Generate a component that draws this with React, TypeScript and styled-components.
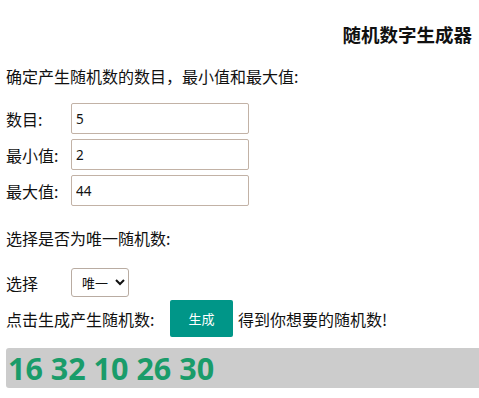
import { useState } from 'react';
import styled, { createGlobalStyle } from 'styled-components';

const GlobalStyle = createGlobalStyle`
  body {
    margin: 0;
    background: #fff;
    font-family: "Noto Sans CJK SC", "Noto Sans", sans-serif;
    color: #111;
  }
`;

const Page = styled.div`
  padding: 0 0 0 6px;
  font-size: 16px;
`;

const Title = styled.h1`
  margin: 0;
  padding: 21px 7px 0 0;
  text-align: right;
  font-size: 18.5px;
  line-height: 26px;
  font-weight: 700;
`;

const Text = styled.p<{ $top: number }>`
  margin: ${(p) => p.$top}px 0 0;
  line-height: 24px;
`;

const Fields = styled.div`
  display: flex;
  flex-direction: column;
  gap: 5px;
  margin-top: 15px;
`;

const Row = styled.div<{ $top?: number }>`
  display: flex;
  align-items: center;
  margin-top: ${(p) => p.$top ?? 0}px;
`;

const Label = styled.label`
  width: 65px;
  line-height: 24px;
`;

const Input = styled.input`
  box-sizing: border-box;
  width: 178px;
  height: 31px;
  border: 1px solid #c2b2a6;
  border-radius: 2px;
  padding: 0 4px;
  font-family: "Noto Sans", sans-serif;
  font-size: 13.5px;
  color: #111;
  outline: none;
`;

const Select = styled.select`
  box-sizing: border-box;
  width: 58px;
  height: 29px;
  border: 1px solid #b9aca2;
  border-radius: 3px;
  background: #fff;
  font-family: "Noto Sans CJK SC", sans-serif;
  font-size: 13px;
  color: #111;
  padding: 0 2px 0 6px;
`;

const GenButton = styled.button`
  width: 63px;
  height: 37px;
  margin: 0 5px 0 0;
  border: none;
  border-radius: 2px;
  background: #009688;
  color: #fff;
  font-family: "Noto Sans CJK SC", sans-serif;
  font-size: 13px;
  cursor: pointer;
`;

const ButtonLabel = styled.span`
  width: 164px;
  line-height: 24px;
`;

const Result = styled.div`
  margin-top: 11px;
  height: 40px;
  border-radius: 3px 0 0 3px;
  background: #cccccc;
  padding: 0 2px;
  font-family: "Open Sans", "Noto Sans", sans-serif;
  font-weight: 700;
  font-size: 30.5px;
  line-height: 40px;
  color: #1a9c6a;
`;

export default function App() {
  const [count, setCount] = useState('5');
  const [min, setMin] = useState('2');
  const [max, setMax] = useState('44');
  const [unique, setUnique] = useState('unique');
  const [nums, setNums] = useState<number[]>([16, 32, 10, 26, 30]);

  const generate = () => {
    const n = parseInt(count) || 0;
    const lo = parseInt(min) || 0;
    const hi = parseInt(max) || 0;
    const out: number[] = [];
    let guard = 0;
    while (out.length < n && guard < 10000) {
      guard++;
      const v = lo + Math.floor(Math.random() * (hi - lo + 1));
      if (unique === 'unique' && out.includes(v)) continue;
      out.push(v);
    }
    setNums(out);
  };

  return (
    <Page>
      <GlobalStyle />
      <Title>随机数字生成器</Title>
      <Text $top={17}>确定产生随机数的数目，最小值和最大值:</Text>
      <Fields>
        <Row>
          <Label>数目:</Label>
          <Input value={count} onChange={(e) => setCount(e.target.value)} />
        </Row>
        <Row>
          <Label>最小值:</Label>
          <Input value={min} onChange={(e) => setMin(e.target.value)} />
        </Row>
        <Row>
          <Label>最大值:</Label>
          <Input value={max} onChange={(e) => setMax(e.target.value)} />
        </Row>
      </Fields>
      <Text $top={20}>选择是否为唯一随机数:</Text>
      <Row $top={18}>
        <Label>选择</Label>
        <Select value={unique} onChange={(e) => setUnique(e.target.value)}>
          <option value="unique">唯一</option>
          <option value="repeat">可重复</option>
        </Select>
      </Row>
      <Row $top={3}>
        <ButtonLabel>点击生成产生随机数:</ButtonLabel>
        <GenButton onClick={generate}>生成</GenButton>
        <span>得到你想要的随机数!</span>
      </Row>
      <Result>{nums.join(' ')}</Result>
    </Page>
  );
}
